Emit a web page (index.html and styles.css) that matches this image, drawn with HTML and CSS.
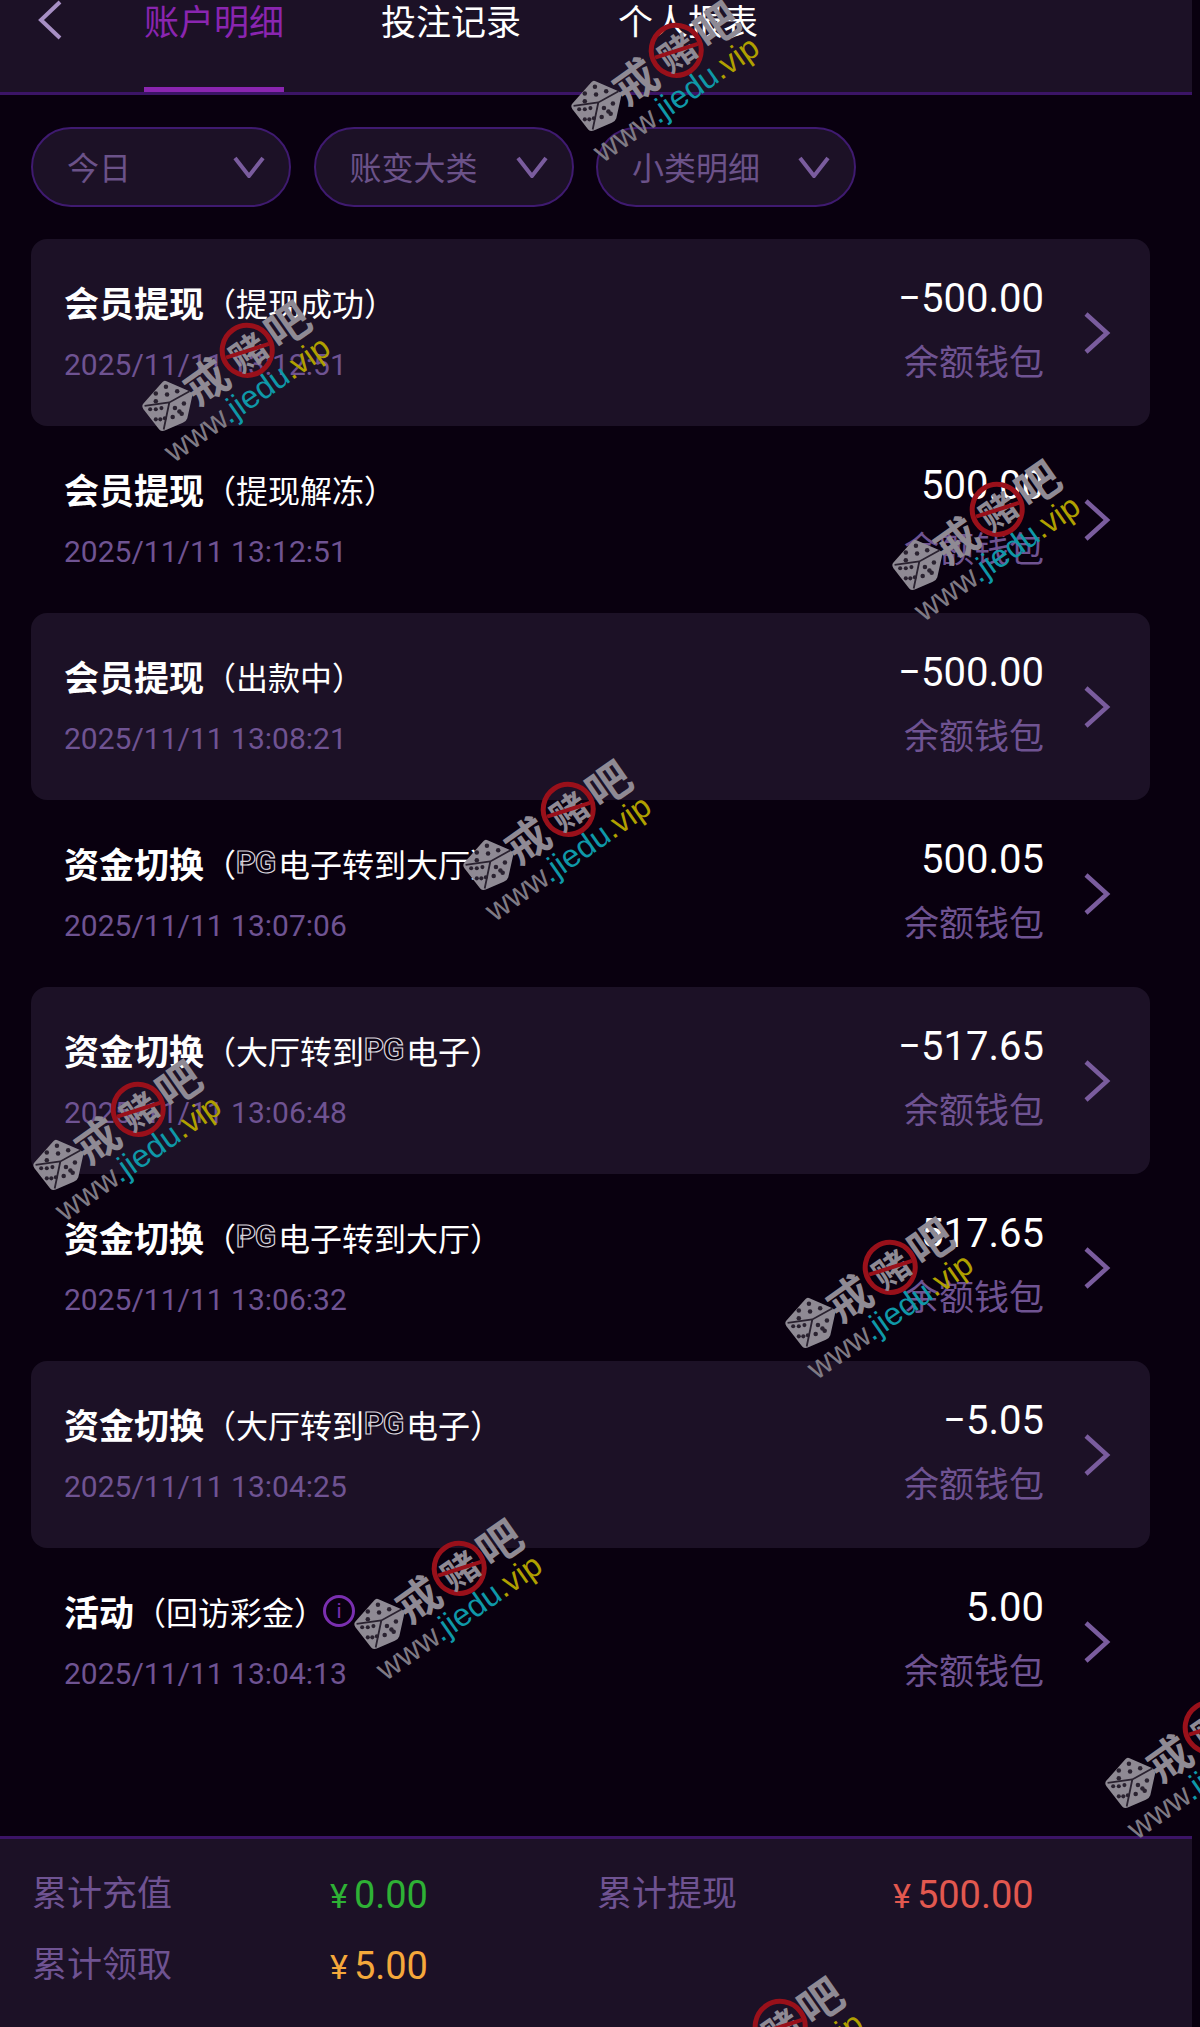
FILE: index.html
```html
<!DOCTYPE html>
<html lang="zh-CN">
<head>
    <meta charset="UTF-8">
    <meta name="viewport" content="width=device-width, initial-scale=1.0">
    <title>账户明细</title>
    <link rel="stylesheet" href="styles.css">
</head>
<body>
    <svg class="defs" width="0" height="0">
        <symbol id="dice" viewBox="0 0 48 48">
            <path d="M23 2 L44 11 Q47 13 46 17 L42 35 Q41 38 38 39 L22 46 Q19 47 17 45 L3 27 Q1 24 3 22 L19 4 Q21 1 23 2 Z" fill="#8f8a94"/>
            <path d="M4 24 L26 21 L44 11 M26 21 L21 45" fill="none" stroke="#2a2230" stroke-width="1.6"/>
            <g fill="#2a2230">
                <circle cx="23" cy="7" r="2"/><circle cx="33" cy="11" r="2"/><circle cx="14" cy="13" r="2"/>
                <circle cx="24" cy="14" r="2"/><circle cx="14" cy="20" r="2"/>
                <circle cx="31" cy="26" r="2"/><circle cx="39" cy="22" r="2"/><circle cx="35" cy="29" r="2"/>
                <circle cx="29" cy="34" r="2"/><circle cx="37" cy="31" r="2"/>
                <circle cx="9" cy="27" r="1.8"/><circle cx="14" cy="27" r="1.8"/><circle cx="19" cy="26" r="1.8"/>
                <circle cx="14" cy="36" r="1.8"/><circle cx="18" cy="36" r="1.8"/><circle cx="22" cy="35" r="1.8"/>
            </g>
        </symbol>
    </svg>

    <div class="page">
        <header class="top-bar">
            <svg class="back" viewBox="0 0 26 40"><polyline points="23,2 4,20 23,38"/></svg>
            <div class="tab active">账户明细</div>
            <div class="tab">投注记录</div>
            <div class="tab">个人报表</div>
        </header>

        <div class="filters">
            <div class="pill"><span>今日</span><svg viewBox="0 0 32 22"><polyline points="2,2 16,20 30,2"/></svg></div>
            <div class="pill"><span>账变大类</span><svg viewBox="0 0 32 22"><polyline points="2,2 16,20 30,2"/></svg></div>
            <div class="pill"><span>小类明细</span><svg viewBox="0 0 32 22"><polyline points="2,2 16,20 30,2"/></svg></div>
        </div>

        <div class="list">
            <div class="row">
                <div class="row-left">
                    <div class="row-title"><b>会员提现</b><span>（提现成功）</span></div>
                    <div class="row-date">2025/11/11 13:12:51</div>
                </div>
                <div class="row-right"><div class="amount">−500.00</div><div class="wallet">余额钱包</div></div>
                <svg class="more" viewBox="0 0 28 44"><polyline points="3,3 24,22 3,41"/></svg>
            </div>
            <div class="row">
                <div class="row-left">
                    <div class="row-title"><b>会员提现</b><span>（提现解冻）</span></div>
                    <div class="row-date">2025/11/11 13:12:51</div>
                </div>
                <div class="row-right"><div class="amount">500.00</div><div class="wallet">余额钱包</div></div>
                <svg class="more" viewBox="0 0 28 44"><polyline points="3,3 24,22 3,41"/></svg>
            </div>
            <div class="row">
                <div class="row-left">
                    <div class="row-title"><b>会员提现</b><span>（出款中）</span></div>
                    <div class="row-date">2025/11/11 13:08:21</div>
                </div>
                <div class="row-right"><div class="amount">−500.00</div><div class="wallet">余额钱包</div></div>
                <svg class="more" viewBox="0 0 28 44"><polyline points="3,3 24,22 3,41"/></svg>
            </div>
            <div class="row">
                <div class="row-left">
                    <div class="row-title"><b>资金切换</b><span>（<i class="pg">PG</i>电子转到大厅）</span></div>
                    <div class="row-date">2025/11/11 13:07:06</div>
                </div>
                <div class="row-right"><div class="amount">500.05</div><div class="wallet">余额钱包</div></div>
                <svg class="more" viewBox="0 0 28 44"><polyline points="3,3 24,22 3,41"/></svg>
            </div>
            <div class="row">
                <div class="row-left">
                    <div class="row-title"><b>资金切换</b><span>（大厅转到<i class="pg">PG</i>电子）</span></div>
                    <div class="row-date">2025/11/11 13:06:48</div>
                </div>
                <div class="row-right"><div class="amount">−517.65</div><div class="wallet">余额钱包</div></div>
                <svg class="more" viewBox="0 0 28 44"><polyline points="3,3 24,22 3,41"/></svg>
            </div>
            <div class="row">
                <div class="row-left">
                    <div class="row-title"><b>资金切换</b><span>（<i class="pg">PG</i>电子转到大厅）</span></div>
                    <div class="row-date">2025/11/11 13:06:32</div>
                </div>
                <div class="row-right"><div class="amount">517.65</div><div class="wallet">余额钱包</div></div>
                <svg class="more" viewBox="0 0 28 44"><polyline points="3,3 24,22 3,41"/></svg>
            </div>
            <div class="row">
                <div class="row-left">
                    <div class="row-title"><b>资金切换</b><span>（大厅转到<i class="pg">PG</i>电子）</span></div>
                    <div class="row-date">2025/11/11 13:04:25</div>
                </div>
                <div class="row-right"><div class="amount">−5.05</div><div class="wallet">余额钱包</div></div>
                <svg class="more" viewBox="0 0 28 44"><polyline points="3,3 24,22 3,41"/></svg>
            </div>
            <div class="row">
                <div class="row-left">
                    <div class="row-title"><b>活动</b><span>（回访彩金）</span><em class="info">i</em></div>
                    <div class="row-date">2025/11/11 13:04:13</div>
                </div>
                <div class="row-right"><div class="amount">5.00</div><div class="wallet">余额钱包</div></div>
                <svg class="more" viewBox="0 0 28 44"><polyline points="3,3 24,22 3,41"/></svg>
            </div>
        </div>

        <footer class="totals">
            <div class="label">累计充值</div>
            <div class="money green"><small>¥</small>0.00</div>
            <div class="label">累计提现</div>
            <div class="money red"><small>¥</small>500.00</div>
            <div class="label">累计领取</div>
            <div class="money amber"><small>¥</small>5.00</div>
        </footer>
    </div>

    <!-- watermarks stamped over the screenshot -->
    <div class="wm wm-1"><div class="wm-top"><svg class="wm-dice"><use href="#dice"/></svg><span>戒</span><span class="wm-ban">赌</span><span class="wm-last">吧</span></div><div class="wm-url">www<u>.jiedu</u><s>.vip</s></div></div>
    <div class="wm wm-2"><div class="wm-top"><svg class="wm-dice"><use href="#dice"/></svg><span>戒</span><span class="wm-ban">赌</span><span class="wm-last">吧</span></div><div class="wm-url">www<u>.jiedu</u><s>.vip</s></div></div>
    <div class="wm wm-3"><div class="wm-top"><svg class="wm-dice"><use href="#dice"/></svg><span>戒</span><span class="wm-ban">赌</span><span class="wm-last">吧</span></div><div class="wm-url">www<u>.jiedu</u><s>.vip</s></div></div>
    <div class="wm wm-4"><div class="wm-top"><svg class="wm-dice"><use href="#dice"/></svg><span>戒</span><span class="wm-ban">赌</span><span class="wm-last">吧</span></div><div class="wm-url">www<u>.jiedu</u><s>.vip</s></div></div>
    <div class="wm wm-5"><div class="wm-top"><svg class="wm-dice"><use href="#dice"/></svg><span>戒</span><span class="wm-ban">赌</span><span class="wm-last">吧</span></div><div class="wm-url">www<u>.jiedu</u><s>.vip</s></div></div>
    <div class="wm wm-6"><div class="wm-top"><svg class="wm-dice"><use href="#dice"/></svg><span>戒</span><span class="wm-ban">赌</span><span class="wm-last">吧</span></div><div class="wm-url">www<u>.jiedu</u><s>.vip</s></div></div>
    <div class="wm wm-7"><div class="wm-top"><svg class="wm-dice"><use href="#dice"/></svg><span>戒</span><span class="wm-ban">赌</span><span class="wm-last">吧</span></div><div class="wm-url">www<u>.jiedu</u><s>.vip</s></div></div>
    <div class="wm wm-8"><div class="wm-top"><svg class="wm-dice"><use href="#dice"/></svg><span>戒</span><span class="wm-ban">赌</span><span class="wm-last">吧</span></div><div class="wm-url">www<u>.jiedu</u><s>.vip</s></div></div>
    <div class="wm wm-9"><div class="wm-top"><svg class="wm-dice"><use href="#dice"/></svg><span>戒</span><span class="wm-ban">赌</span><span class="wm-last">吧</span></div><div class="wm-url">www<u>.jiedu</u><s>.vip</s></div></div>
</body>
</html>
```

FILE: styles.css
```css
html, body {
    margin: 0;
    height: 2027px;
    overflow: hidden;
    background-color: #09000f;
}

body {
    position: relative;
    font-family: Roboto, "Noto Sans CJK SC", sans-serif;
}

.defs {
    position: absolute;
}

.page {
    width: 1192px;
    height: 2027px;
    display: flex;
    flex-direction: column;
}

/* top tabs */
.top-bar {
    height: 92px;
    display: flex;
    align-items: flex-start;
    background-color: #1c1126;
    border-bottom: 3px solid #3b1466;
}

.back {
    width: 26px;
    height: 40px;
    margin-left: 37px;
    margin-right: 81px;
    fill: none;
    stroke: #a78fc4;
    stroke-width: 4;
}

.tab {
    height: 87px;
    line-height: 47px;
    font-size: 35px;
    color: #fff;
    margin-right: 97px;
    border-bottom: 5px solid transparent;
}

.tab.active {
    color: #8a25b0;
    border-bottom-color: #8a25b0;
}

/* filter pills */
.filters {
    display: flex;
    gap: 22.5px;
    padding: 32px 0 32px 31px;
}

.pill {
    width: 260px;
    height: 80px;
    box-sizing: border-box;
    display: flex;
    align-items: center;
    justify-content: space-between;
    padding: 0 24px 0 34px;
    background-color: #1c1126;
    border: 2.5px solid #3f1a70;
    border-radius: 40px;
    font-size: 32px;
    color: #6b5289;
}

.pill span {
    margin-bottom: 3px;
}

.pill svg {
    width: 32px;
    height: 22px;
    fill: none;
    stroke: #7a5c9e;
    stroke-width: 4;
}

/* records */
.list {
    margin: 0 42px 0 31px;
}

.row {
    height: 187px;
    display: flex;
    align-items: center;
    padding: 0 39px 0 33px;
    border-radius: 16px;
}

.row:nth-child(odd) {
    background-color: #1c1126;
}

.row-left {
    flex: 1;
    padding-top: 1px;
}

.row-title {
    display: flex;
    align-items: center;
    height: 44px;
    margin-bottom: 19px;
    color: #fff;
}

.row-title b {
    font-size: 35px;
    font-weight: 700;
}

.row-title span {
    font-size: 32px;
    display: flex;
    align-items: center;
}

.pg {
    width: 42px;
    font-family: Roboto, sans-serif;
    font-size: 31px;
    font-style: normal;
    font-weight: 700;
    letter-spacing: -1px;
    color: #09000f;
    -webkit-text-stroke: 1.2px #d8d4dc;
}

.info {
    width: 26px;
    height: 26px;
    margin-left: -3px;
    border: 3px solid #7a2fb0;
    border-radius: 50%;
    text-align: center;
    line-height: 26px;
    font-size: 21px;
    font-style: normal;
    color: #7a2fb0;
}

.row-date {
    height: 44px;
    line-height: 44px;
    font-size: 30px;
    color: #6f5392;
}

.row-right {
    text-align: right;
    padding-bottom: 3px;
}

.amount {
    height: 44px;
    line-height: 44px;
    margin-bottom: 21px;
    font-size: 40px;
    color: #fff;
}

.wallet {
    height: 44px;
    line-height: 44px;
    font-size: 35px;
    color: #6f5392;
}

.more {
    width: 28px;
    height: 44px;
    margin-left: 39px;
    fill: none;
    stroke: #7a5c9e;
    stroke-width: 4.5;
}

/* totals */
.totals {
    box-sizing: border-box;
    height: 191px;
    margin-top: auto;
    display: grid;
    grid-template-columns: 298px 267px 296px 1fr;
    grid-auto-rows: 50px;
    row-gap: 21px;
    padding: 31px 0 0 32px;
    background-color: #1c1126;
    border-top: 3px solid #3b1466;
}

.label {
    line-height: 50px;
    font-size: 35px;
    color: #6f5392;
}

.money {
    line-height: 50px;
    font-size: 38px;
}

.money small {
    font-size: 34px;
    margin-right: 6px;
}

.green { color: #2eb135; }
.red { color: #e2584f; }
.amber { color: #f5a83b; }

/* watermark */
.wm {
    position: absolute;
    width: 280px;
    transform: translate(-50%, -50%) rotate(-35deg);
    display: flex;
    flex-direction: column;
    align-items: center;
    font-family: "Noto Sans CJK SC", sans-serif;
}

.wm-top {
    display: flex;
    align-items: center;
    height: 56px;
    font-size: 44px;
    font-weight: 700;
    color: #8f8a94;
}

.wm-dice {
    width: 54px;
    height: 54px;
    margin-right: -3px;
    transform: rotate(35deg);
}

.wm-ban {
    position: relative;
    width: 55px;
    height: 55px;
    box-sizing: border-box;
    margin: 0 2px;
    border: 5px solid #99101a;
    border-radius: 50%;
    font-size: 36px;
    line-height: 44px;
    text-align: center;
}

.wm-ban::after {
    content: "";
    position: absolute;
    left: 0;
    right: 0;
    top: 21px;
    height: 4px;
    background-color: #99101a;
    transform: rotate(17deg);
}

.wm-last {
    margin-left: -4px;
}

.wm-url {
    margin-top: -6px;
    margin-left: -1px;
    font-family: "Liberation Sans", sans-serif;
    font-size: 32px;
    line-height: 36px;
    color: #7f7a84;
}

.wm-url u {
    text-decoration: none;
    color: #0f98a8;
}

.wm-url s {
    text-decoration: none;
    color: #b0a000;
}

.wm-1 { left: 662px; top: 78px; }
.wm-2 { left: 233px; top: 378px; }
.wm-3 { left: 983px; top: 537px; }
.wm-4 { left: 554px; top: 837px; }
.wm-5 { left: 124px; top: 1137px; }
.wm-6 { left: 876px; top: 1295px; }
.wm-7 { left: 445px; top: 1596px; }
.wm-8 { left: 1196px; top: 1755px; }
.wm-9 { left: 766px; top: 2054px; }
```
